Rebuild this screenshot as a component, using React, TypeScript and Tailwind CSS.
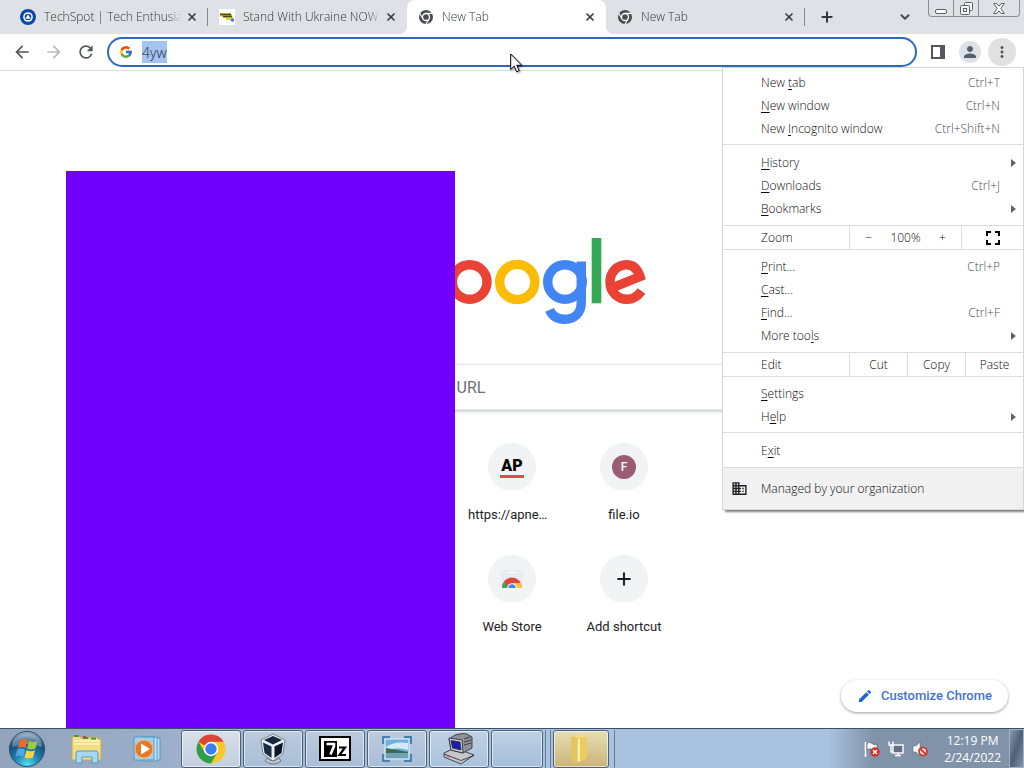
import type { ReactNode } from "react";
import { Plus, X, ChevronDown } from "lucide-react";
import {
  MdArrowBack,
  MdArrowForward,
  MdRefresh,
  MdPerson,
  MdMoreVert,
  MdEdit,
  MdFullscreen,
  MdDomain,
} from "react-icons/md";
import { FcGoogle } from "react-icons/fc";

type MenuEntry = {
  label: string;
  // index of the underlined access key, if any
  accessKey?: number;
  shortcut?: string;
  submenu?: boolean;
};

const tabActions: MenuEntry[] = [
  { label: "New tab", accessKey: 4, shortcut: "Ctrl+T" },
  { label: "New window", accessKey: 0, shortcut: "Ctrl+N" },
  { label: "New Incognito window", accessKey: 4, shortcut: "Ctrl+Shift+N" },
];

const libraryActions: MenuEntry[] = [
  { label: "History", accessKey: 0, submenu: true },
  { label: "Downloads", accessKey: 0, shortcut: "Ctrl+J" },
  { label: "Bookmarks", accessKey: 0, submenu: true },
];

const pageActions: MenuEntry[] = [
  { label: "Print...", accessKey: 0, shortcut: "Ctrl+P" },
  { label: "Cast...", accessKey: 0 },
  { label: "Find...", accessKey: 0, shortcut: "Ctrl+F" },
  { label: "More tools", accessKey: 8, submenu: true },
];

const settingsActions: MenuEntry[] = [
  { label: "Settings", accessKey: 0 },
  { label: "Help", accessKey: 1, submenu: true },
];

function ChromeMono() {
  return (
    <svg viewBox="0 0 16 16" className="size-4 shrink-0" aria-hidden="true">
      <circle cx="8" cy="8" r="7" fill="#494d51" />
      <circle cx="8" cy="8" r="3.5" fill="none" stroke="#fff" strokeWidth="1.3" />
      <path
        d="M8 4.4H14.4M4.9 9.8L1.7 4.3M11.1 9.8L8 15.2"
        stroke="#fff"
        strokeWidth="1.1"
      />
    </svg>
  );
}

function TechSpotIcon() {
  return (
    <svg viewBox="0 0 16 16" className="size-4 shrink-0" aria-hidden="true">
      <circle cx="8" cy="8" r="8" fill="#0b48ab" />
      <circle cx="8" cy="8" r="4.8" fill="#fff" />
      <circle cx="8" cy="8" r="3.3" fill="#0b48ab" />
      <path d="M8 5.2L10.6 9.8H5.4Z" fill="#fff" />
    </svg>
  );
}

function UkraineIcon() {
  return (
    <svg viewBox="0 0 16 16" className="size-4 shrink-0" aria-hidden="true">
      <rect width="16" height="16" fill="#fff" />
      <path d="M1 4H12L14 9H5L3 7.500H1Z" fill="#d9cf2c" />
      <path d="M1 5.500H12M4 7.500H13" stroke="#4a4a1c" strokeWidth="1.3" />
      <path d="M7 10H14" stroke="#e3d72c" strokeWidth="2" />
      <circle cx="13.5" cy="11" r="1.8" fill="#4a78c8" />
    </svg>
  );
}

function Tab({
  title,
  icon,
  active = false,
  divider = false,
}: {
  title: string;
  icon: ReactNode;
  active?: boolean;
  divider?: boolean;
}) {
  return (
    <div
      className={`relative flex w-[199px] min-w-0 items-center ${
        active ? "rounded-t-lg bg-white" : ""
      }`}
    >
      {active && (
        <>
          <span className="absolute bottom-0 -left-2 size-2 bg-[radial-gradient(circle_at_0_0,transparent_8px,white_8px)]" />
          <span className="absolute -right-2 bottom-0 size-2 bg-[radial-gradient(circle_at_100%_0,transparent_8px,white_8px)]" />
        </>
      )}
      <div
        className={`flex h-[18px] min-w-0 flex-1 items-center gap-2 border-r pr-[7px] pl-[11px] ${
          divider ? "border-[#85898e]" : "border-transparent"
        }`}
      >
        {icon}
        <span className="-mr-1.5 min-w-0 flex-1 overflow-hidden mask-r-from-90% text-xs whitespace-nowrap text-[#303438]">
          {title}
        </span>
        <button type="button" aria-label={`Close ${title}`} className="flex size-4 items-center justify-center">
          <X className="size-3 text-[#3c4043]" strokeWidth={3.5} />
        </button>
      </div>
    </div>
  );
}

function WindowControls() {
  return (
    <div className="mr-1 flex h-[17px] w-[92px] shrink-0 self-start rounded-b border border-t-0 border-[#8a8f96] text-[#5c6168]">
      <button type="button" aria-label="Minimize" className="flex w-[25px] items-end justify-center border-r border-[#8a8f96] pb-0.5">
        <svg viewBox="0 0 12 5" className="h-[5px] w-3">
          <rect x="0.5" y="0.5" width="11" height="4" rx="1.5" fill="#fff" stroke="currentColor" />
        </svg>
      </button>
      <button type="button" aria-label="Restore" className="flex w-[25px] items-center justify-center border-r border-[#8a8f96]">
        <svg viewBox="0 0 13 13" className="size-[13px]" fill="#f3f4f6" stroke="currentColor">
          <rect x="4.5" y="0.5" width="8" height="8" rx="1" />
          <rect x="0.5" y="3.5" width="9" height="9" rx="1" />
          <rect x="3.5" y="6.5" width="3" height="3" />
        </svg>
      </button>
      <button type="button" aria-label="Close window" className="flex flex-1 items-center justify-center">
        <svg viewBox="0 0 12 11" className="h-[11px] w-3" fill="#fff" stroke="currentColor">
          <path d="M0.7 0.5H3.8L6 3.2L8.2 0.5H11.3L7.8 5.5L11.3 10.5H8.2L6 7.8L3.8 10.5H0.7L4.2 5.5Z" />
        </svg>
      </button>
    </div>
  );
}

function MenuRow({ label, accessKey, shortcut, submenu }: MenuEntry) {
  return (
    <button
      type="button"
      className="flex h-[23px] w-full items-center justify-between pr-[23px] pl-[38px] text-left"
    >
      <span>
        {accessKey === undefined ? (
          label
        ) : (
          <>
            {label.slice(0, accessKey)}
            <span className="underline underline-offset-2">{label[accessKey]}</span>
            {label.slice(accessKey + 1)}
          </>
        )}
      </span>
      {shortcut && <span className="text-[#4a4e53]">{shortcut}</span>}
      {submenu && (
        <svg viewBox="0 0 5 8" className="-mr-4 h-2 w-[5px]" aria-hidden="true">
          <path d="M0 0L5 4L0 8Z" fill="#5f6368" />
        </svg>
      )}
    </button>
  );
}

function MenuGroup({ entries, className }: { entries: MenuEntry[]; className: string }) {
  return (
    <div className={className}>
      {entries.map((entry) => (
        <MenuRow key={entry.label} {...entry} />
      ))}
    </div>
  );
}

function ChromeMenu() {
  return (
    <div className="absolute top-[33px] right-0 z-20 w-[302px] border border-[#d5d6d8] bg-white text-xs text-[#0c0d0e] shadow-[3px_2px_2px_rgba(0,0,0,0.5)]">
      <MenuGroup entries={tabActions} className="pt-[3px] pb-1" />
      <MenuGroup entries={libraryActions} className="border-t border-[#dadce0] pt-1.5 pb-[5px]" />

      <div className="flex h-[25px] items-stretch border-y border-[#dadce0]">
        <span className="flex w-[127px] items-center border-r border-[#dadce0] pl-[38px]">Zoom</span>
        <div className="flex flex-1 items-center justify-around border-r border-[#dadce0] px-1.5">
          <button type="button" aria-label="Zoom out">−</button>
          <span>100%</span>
          <button type="button" aria-label="Zoom in">+</button>
        </div>
        <button type="button" aria-label="Full screen" className="flex w-[61px] items-center justify-center">
          <MdFullscreen className="size-6 text-black" />
        </button>
      </div>

      <MenuGroup entries={pageActions} className="pt-[5px] pb-[5px]" />

      <div className="flex h-[25px] items-stretch border-y border-[#dadce0]">
        <span className="flex w-[127px] items-center border-r border-[#dadce0] pl-[38px]">Edit</span>
        <button type="button" className="flex-1 border-r border-[#dadce0]">Cut</button>
        <button type="button" className="flex-1 border-r border-[#dadce0]">Copy</button>
        <button type="button" className="flex-1">Paste</button>
      </div>

      <MenuGroup entries={settingsActions} className="pt-[5px] pb-1" />
      <MenuGroup entries={[{ label: "Exit", accessKey: 1 }]} className="border-t border-[#dadce0] pt-1.5 pb-[5px]" />

      <button
        type="button"
        className="flex h-[42px] w-full items-center gap-[13px] border-t border-[#dadce0] bg-[#f1f1f2] pl-2 text-left"
      >
        <MdDomain className="size-[17px] text-[#202124]" />
        Managed by your organization
      </button>
    </div>
  );
}

function GoogleLogo() {
  return (
    <svg
      viewBox="376 232 272 92"
      className="h-[92px] w-[272px]"
      fill="none"
      strokeWidth="9.4"
      role="img"
      aria-label="Google"
    >
      <path d="M423 252A32 32 0 1 0 432 274H402" stroke="#4285f4" />
      <circle cx="469.7" cy="282" r="17.3" stroke="#ea4335" />
      <circle cx="517.3" cy="282" r="17.6" stroke="#fbbc05" />
      <circle cx="565" cy="282" r="17.3" stroke="#4285f4" />
      <path
        d="M581.3 261.5V302C581.3 313.500 574 319.300 565 319.300C557.500 319.300 552 315.500 549.500 309.800"
        stroke="#4285f4"
      />
      <rect x="591.7" y="238" width="9.6" height="65.300" fill="#34a853" />
      <path d="M613 287.500L640 276.500C637.500 268.800 633 264.700 626.500 264.700C617 264.700 610 272.500 610 282C610 292 617.500 299.300 627 299.300C633.500 299.300 638 296 641.500 291" stroke="#ea4335" />
    </svg>
  );
}

function Shortcut({ label, className = "", children }: { label: string; className?: string; children: ReactNode }) {
  return (
    <a href="#" className={`flex h-28 flex-col items-center pt-[15px] ${className}`}>
      <span className="flex size-12 items-center justify-center rounded-full bg-[#f1f3f4]">{children}</span>
      <span className="mt-4 w-[88px] truncate text-center text-[13px] leading-4 text-[#202124]">{label}</span>
    </a>
  );
}

function NewTabPage() {
  return (
    <main className="relative flex flex-1 flex-col items-center bg-white pt-[161px] font-[Roboto,sans-serif] font-normal">
      <GoogleLogo />
      <input
        type="text"
        aria-label="Search Google or type a URL"
        placeholder="Search Google or type a URL"
        className="mt-10 h-[46px] w-[561px] max-w-full rounded-full border border-[#e4e5e8] bg-white pl-[51px] text-base shadow-[0_2px_3px_rgba(32,33,36,0.2)] outline-none placeholder:text-[#6b6f74]"
      />
      <nav aria-label="Shortcuts" className="mt-[18px] grid w-[336px] grid-cols-3">
        <Shortcut label="https://apnews.com" className="col-start-2">
          <svg viewBox="0 0 24 24" className="size-6" role="img" aria-label="AP">
            <text x="12" y="16" textAnchor="middle" fontSize="16" fontWeight="900" fontFamily="Roboto, sans-serif">
              AP
            </text>
            <rect y="20" width="24" height="3" fill="#dc4f4b" />
          </svg>
        </Shortcut>
        <Shortcut label="file.io">
          <span className="flex size-6 items-center justify-center rounded-full bg-[#9c5c72] text-xs font-medium text-white">
            F
          </span>
        </Shortcut>
        <Shortcut label="Web Store" className="col-start-2">
          <svg viewBox="0 0 24 24" className="size-6" aria-hidden="true">
            <path d="M0 3H24L22 21H2Z" fill="#e9ecf1" />
            <path d="M8 5.5H16" stroke="#fff" strokeWidth="1.500" />
            <clipPath id="store-dome">
              <path d="M2 21A10 10.500 0 0 1 22 21Z" />
            </clipPath>
            <g clipPath="url(#store-dome)">
              <rect y="10" width="24" height="11" fill="#e0443a" />
              <path d="M0 14L4 15L9 21H0Z" fill="#34a853" />
              <path d="M13 16H24V21H14Z" fill="#fbc834" />
            </g>
            <path d="M7.200 21A4.800 4.800 0 0 1 16.800 21Z" fill="#fff" />
            <path d="M8.300 21A3.700 3.700 0 0 1 15.700 21Z" fill="#4285f4" />
          </svg>
        </Shortcut>
        <Shortcut label="Add shortcut">
          <Plus className="size-5 text-[#202124]" strokeWidth={2.500} />
        </Shortcut>
      </nav>

      <div className="absolute top-[100px] bottom-0 left-[66px] w-[389px] bg-[#7200ff]" />

      <button
        type="button"
        className="absolute right-4 bottom-4 flex h-8 items-center gap-2 rounded-full bg-white px-4 text-[13px] font-medium text-[#3f73cf] shadow-[0_1px_3px_rgba(60,64,67,0.5)]"
      >
        <MdEdit className="size-4 text-[#1a66d2]" />
        Customize Chrome
      </button>
    </main>
  );
}

function StartOrb() {
  return (
    <svg viewBox="0 0 38 38" className="size-[38px]" aria-hidden="true">
      <defs>
        <radialGradient id="orb" cx="0.5" cy="0.95" r="0.95">
          <stop offset="0" stopColor="#55e0f2" />
          <stop offset="0.4" stopColor="#1b7fae" />
          <stop offset="0.75" stopColor="#174b77" />
          <stop offset="1" stopColor="#a6bdd0" />
        </radialGradient>
      </defs>
      <circle cx="19" cy="19" r="17.500" fill="url(#orb)" stroke="#2b4b69" />
      <path d="M4 17A15 13 0 0 1 34 17Q19 11 4 17" fill="#fff" opacity="0.3" />
      <path d="M12 10Q16 8 19.500 10.500L17.500 18Q14 16 10 18Z" fill="#ef6a2e" />
      <path d="M21 11Q25 13 29.500 11L27.500 18.500Q23 20.500 19 18.500Z" fill="#9ccb3f" />
      <path d="M9.500 19.500Q13.500 17.500 17 20L15 27Q11.500 24.500 7.500 26.500Z" fill="#58a5e4" />
      <path d="M18.500 20.300Q23 22.300 27 20.300L25 27.500Q21 29.500 16.500 27.500Z" fill="#fbd043" />
    </svg>
  );
}

function ExplorerIcon() {
  return (
    <svg viewBox="0 0 32 30" className="h-[30px] w-8" aria-hidden="true">
      <path d="M1 4L2 2H9L10 4H18L19 3H26L27 5H30V26H1Z" fill="#f5dd83" stroke="#c8a850" />
      <path d="M3 2H8M12 4H17M20 4.500H25" stroke="#3f9a47" strokeWidth="2" />
      <path d="M12 3H15" stroke="#cf4233" strokeWidth="2" />
      <path d="M3 7H29M3 10H29" stroke="#fff3bd" strokeWidth="1.500" />
      <path d="M5 29V19Q5 17 7 17H25Q27 17 27 19V29H21V23H11V29Z" fill="#a6d8f2" stroke="#4b9cc9" />
    </svg>
  );
}

function MediaPlayerIcon() {
  return (
    <svg viewBox="0 0 30 28" className="h-7 w-[30px]" aria-hidden="true">
      <path d="M12 3H27V25H12Z" fill="#b9dcf1" stroke="#4e9ac6" />
      <path d="M8 2H24V26H8Z" fill="#c9e5f5" stroke="#4e9ac6" />
      <path d="M1 2H21V25H1Z" fill="#a5cfe8" stroke="#4e9ac6" />
      <circle cx="11" cy="14" r="9" fill="#ea7828" stroke="#f7b67d" />
      <path d="M8 8.500L17 14L8 19.500Z" fill="#fff" />
    </svg>
  );
}

function ChromeColorIcon() {
  return (
    <svg viewBox="0 0 30 30" className="size-[30px]" aria-hidden="true">
      <circle cx="15" cy="15" r="14.500" fill="#fbc926" />
      <path d="M15 15L2.400 7.800A14.500 14.500 0 0 1 27.600 7.800H15Z" fill="#dc4437" />
      <path d="M2.400 7.800A14.500 14.500 0 0 0 15 29.500L21.200 18.700L15 15L8.800 18.600Z" fill="#2f9d50" />
      <circle cx="15" cy="15" r="7.200" fill="#fff" />
      <circle cx="15" cy="15" r="5.700" fill="#3b7fec" />
    </svg>
  );
}

function VirtualBoxIcon() {
  return (
    <svg viewBox="0 0 28 32" className="h-8 w-7" aria-hidden="true">
      <path d="M8 25Q14 31 20 25L22 28Q14 34 6 28Z" fill="#c5ccd4" stroke="#6d7886" />
      <path d="M14 1L26 7L24 21L14 28L4 21L2 7Z" fill="#e9eef3" stroke="#76828f" />
      <path d="M14 3L23 7L14 11.500L5 7Z" fill="#18273e" />
      <path d="M4 9.500L12.500 13.500V25L5.500 20Z" fill="#1b2c46" />
      <path d="M24 9.500L15.500 13.500V25L22.500 20Z" fill="#0c1626" />
    </svg>
  );
}

function SevenZipIcon() {
  return (
    <svg viewBox="0 0 32 25" className="h-[25px] w-8" aria-hidden="true">
      <rect x="1" y="1" width="30" height="23" fill="#fff" stroke="#000" strokeWidth="2" />
      <rect x="5" y="5" width="13" height="16" fill="#000" />
      <path d="M7.500 8H15V10L11.500 18.500" fill="none" stroke="#fff" strokeWidth="2.600" />
      <path d="M20 11.500H26L20.500 19H27" fill="none" stroke="#000" strokeWidth="2.200" />
    </svg>
  );
}

function PictureIcon() {
  return (
    <svg viewBox="0 0 30 26" className="h-[26px] w-[30px]" aria-hidden="true">
      <path
        d="M1 8V1H8M22 1H29V8M29 18V25H22M8 25H1V18"
        fill="none"
        stroke="#4782ab"
        strokeWidth="2.500"
      />
      <rect x="3" y="3" width="24" height="20" fill="#6fb0e4" stroke="#e8f2fa" />
      <path d="M4 11Q12 5 26 7V14Q14 10 4 15Z" fill="#d6eaf6" />
      <path d="M4 12Q12 13 26 16V18H4Z" fill="#3d6b51" />
      <path d="M4 17H26V22H4Z" fill="#6fa3b6" />
    </svg>
  );
}

function OldComputerIcon() {
  return (
    <svg viewBox="0 0 32 32" className="size-8" stroke="#23272b" strokeWidth="0.800" aria-hidden="true">
      <path d="M1 20L12 15L31 22L18 31L1 24Z" fill="#c5c7c9" />
      <path d="M1 21L18 27.500L31 22.500" fill="none" />
      <path d="M3 22.500L7 24" stroke="#d0369c" strokeWidth="1.200" />
      <path d="M12 2L22 0L29 4V15L20 20L8 17L6 6Z" fill="#8f9396" />
      <path d="M6 5L19 7L20 20L8 17Z" fill="#d1d3d4" />
      <path d="M8 7.500L17 9L18 17L9.500 15Z" fill="#2018d8" />
      <path d="M10 10L16 15M11 14L16 10M21 6L27 4M21 9L28 7M21 12L28 10" />
    </svg>
  );
}

function FolderIcon() {
  return (
    <svg viewBox="0 0 28 30" className="h-[30px] w-7" aria-hidden="true">
      <path d="M17 24Q25 24 26 19L21 25L13 29Z" fill="#b9984c" opacity="0.600" />
      <path d="M4 3Q10 1 11 2V27L5 29Z" fill="#e5c45b" />
      <path d="M6 2L18 1V26L10 29V4Z" fill="#f4dd83" />
      <path d="M10 4L20 3V25L11 29Z" fill="#eccb60" />
      <path d="M12 5V27" stroke="#fff1b4" strokeWidth="2" />
    </svg>
  );
}

function TaskButton({ label, className, children }: { label: string; className: string; children?: ReactNode }) {
  return (
    <button
      type="button"
      aria-label={label}
      className={`flex h-[38px] shrink items-center justify-center rounded-[3px] border border-[#4b6079] inset-shadow-[0_0_0_1px_rgba(255,255,255,0.6)] ${className}`}
    >
      {children}
    </button>
  );
}

function Tray() {
  return (
    <div className="flex items-center gap-2">
      <button type="button" aria-label="Action Center">
        <svg viewBox="0 0 16 16" className="size-4">
          <path d="M1.500 1V16" stroke="#fff" strokeWidth="1.600" />
          <path d="M3 2Q6 0.500 8 2.500T13 3V9Q10 10 8 8.500T3 9Z" fill="#fff" stroke="#4d5867" strokeWidth="0.700" />
          <circle cx="11" cy="11" r="4.700" fill="#cf2f2a" />
          <path d="M9 9L13 13M13 9L9 13" stroke="#fff" strokeWidth="1.500" />
        </svg>
      </button>
      <button type="button" aria-label="Network">
        <svg viewBox="0 0 16 16" className="size-4" fill="none" stroke="#fff" strokeWidth="1.400">
          <rect x="5" y="4" width="10" height="8" fill="#5f7288" />
          <path d="M7 14.500H13M10 12V14.500" />
          <path d="M1 0.500V4H5V0.500M3 4V11H5" />
        </svg>
      </button>
      <button type="button" aria-label="Volume muted">
        <svg viewBox="0 0 16 16" className="size-4">
          <path d="M1 5H4L8 1V15L4 11H1Z" fill="#fff" stroke="#4d5867" strokeWidth="0.500" />
          <circle cx="11" cy="10.500" r="4" fill="#f4dada" stroke="#cf2f2a" strokeWidth="1.700" />
          <path d="M8.300 7.800L13.700 13.200" stroke="#cf2f2a" strokeWidth="1.700" />
        </svg>
      </button>
    </div>
  );
}

function Taskbar() {
  return (
    <footer className="flex h-10 items-center border-t border-[#3d4f66] bg-linear-to-r from-[#93a3bc] to-[#a8c2df] to-40%">
      <button type="button" aria-label="Start" className="ml-2 shrink-0">
        <StartOrb />
      </button>
      <button type="button" aria-label="Windows Explorer" className="ml-2.5 flex w-[61px] shrink-0 justify-center">
        <ExplorerIcon />
      </button>
      <button type="button" aria-label="Windows Media Player" className="flex w-[61px] shrink-0 justify-center">
        <MediaPlayerIcon />
      </button>
      <div className="ml-[3px] flex flex-1 gap-0.5">
        <TaskButton label="Google Chrome" className="w-[60px] bg-linear-to-b from-[#d7e0ea] to-[#c3cfdf]">
          <ChromeColorIcon />
        </TaskButton>
        <TaskButton label="VirtualBox" className="w-[60px] bg-linear-to-b from-[#bccbdd] to-[#a9bed8]">
          <VirtualBoxIcon />
        </TaskButton>
        <TaskButton label="7-Zip" className="w-[60px] bg-linear-to-b from-[#bccbdd] to-[#a9bed8]">
          <SevenZipIcon />
        </TaskButton>
        <TaskButton label="Picture viewer" className="w-[60px] bg-linear-to-b from-[#bccbdd] to-[#a9bed8]">
          <PictureIcon />
        </TaskButton>
        <TaskButton label="Computer" className="w-[60px] bg-linear-to-b from-[#bfd0e3] to-[#abc3de]">
          <OldComputerIcon />
        </TaskButton>
        <TaskButton label="Window" className="w-[52px] bg-linear-to-b from-[#bfd0e3] to-[#a5bedb]" />
        <div className="w-1.5 border-x border-[#657d99]" />
        <TaskButton label="Folder" className="w-14 bg-linear-to-b from-[#e5dfb4] to-[#cbb479]">
          <FolderIcon />
        </TaskButton>
        <div className="w-1 border-r border-[#657d99]" />
      </div>
      <div className="flex shrink-0 items-center gap-4 self-stretch bg-linear-to-r from-transparent to-[#8193a9] to-25% pr-2 pl-9">
        <Tray />
        <time dateTime="2022-02-24T12:19" className="text-center text-xs leading-[17px] font-normal text-white">
          12:19 PM
          <br />
          2/24/2022
        </time>
      </div>
      <button
        type="button"
        aria-label="Show desktop"
        className="w-[15px] shrink-0 self-stretch border border-[#a5b1bf] bg-linear-to-br from-[#8a99ab] via-[#4d617a] to-[#8394a8]"
      />
    </footer>
  );
}

export default function App() {
  return (
    <div className="relative flex min-h-screen flex-col bg-white font-['Open_Sans','Noto_Sans',sans-serif] font-[350]">
      <header>
        <div className="flex h-[34px] bg-[#dee1e6] pl-[9px]">
          <Tab title="TechSpot | Tech Enthusias" icon={<TechSpotIcon />} divider />
          <Tab title="Stand With Ukraine NOW" icon={<UkraineIcon />} />
          <Tab title="New Tab" icon={<ChromeMono />} active />
          <Tab title="New Tab" icon={<ChromeMono />} divider />
          <div className="flex flex-1 items-center justify-between pr-4 pl-3.5">
            <button type="button" aria-label="New tab">
              <Plus className="size-4 text-[#35383b]" strokeWidth={3} />
            </button>
            <button type="button" aria-label="Search tabs">
              <ChevronDown className="size-3.5 text-[#4a4e53]" strokeWidth={3.500} />
            </button>
          </div>
          <WindowControls />
        </div>

        <div className="relative flex h-[37px] items-center gap-1 border-b border-[#dcdcdc] bg-white px-2">
          <button type="button" aria-label="Back" className="flex size-7 items-center justify-center">
            <MdArrowBack className="size-5 text-[#54585c]" />
          </button>
          <button type="button" aria-label="Forward" className="flex size-7 items-center justify-center">
            <MdArrowForward className="size-5 text-[#b9bbbe]" />
          </button>
          <button type="button" aria-label="Reload" className="flex size-7 items-center justify-center">
            <MdRefresh className="size-5 text-[#54585c]" />
          </button>
          <label className="mx-[3px] flex h-[30px] min-w-0 flex-1 items-center gap-[9px] rounded-full border-2 border-[#2f69bd] bg-white pl-2.5">
            <FcGoogle className="size-[14px] shrink-0" />
            <input
              type="text"
              aria-label="Address and search bar"
              defaultValue="4yw"
              className="field-sizing-content h-[22px] bg-[#a3c3f0] text-sm text-[#1c293d] outline-none"
            />
          </label>
          <button type="button" aria-label="Side panel" className="flex size-7 items-center justify-center">
            <svg viewBox="0 0 14 14" className="size-[14px]">
              <rect x="1" y="1" width="12" height="12" fill="#fff" stroke="#54585c" strokeWidth="2" />
              <rect x="9" y="1" width="4" height="12" fill="#54585c" />
            </svg>
          </button>
          <button type="button" aria-label="Profile" className="flex size-7 items-center justify-center">
            <span className="flex size-[22px] items-center justify-center rounded-full bg-[#dee1e6]">
              <MdPerson className="size-[18px] text-[#54606f]" />
            </span>
          </button>
          <button
            type="button"
            aria-label="Customize and control Google Chrome"
            aria-expanded="true"
            className="flex size-7 items-center justify-center rounded-full bg-[#e1e1e2]"
          >
            <MdMoreVert className="size-[18px] text-[#54585c]" />
          </button>
          <ChromeMenu />
        </div>
      </header>

      <NewTabPage />
      <Taskbar />

      {/* mouse pointer */}
      <svg
        viewBox="0 0 13 20"
        className="absolute top-[53px] left-[510px] h-5 w-[13px] drop-shadow-[1px_1px_1px_rgba(0,0,0,0.4)]"
        aria-hidden="true"
      >
        <path
          d="M0.700 1V16.500L4.200 13.200L6.700 18.800L9.200 17.700L6.800 12.300H11.800Z"
          fill="#fff"
          stroke="#000"
        />
      </svg>
    </div>
  );
}
